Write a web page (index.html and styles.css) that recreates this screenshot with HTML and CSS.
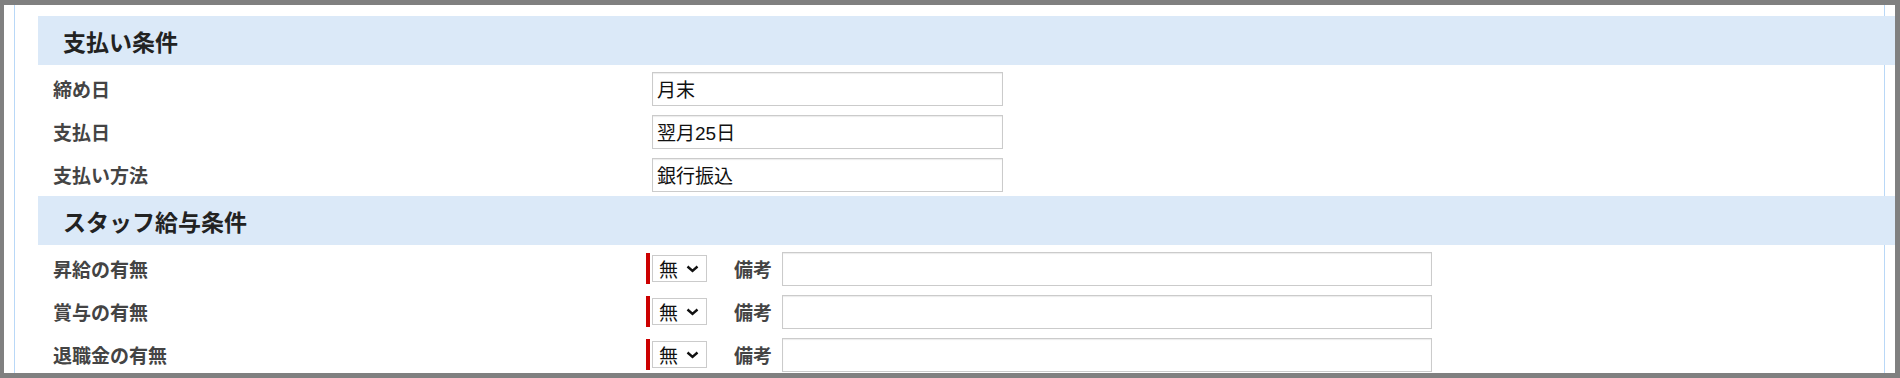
FILE: index.html
```html
<!DOCTYPE html>
<html lang="ja">
<head>
    <meta charset="UTF-8">
    <title>支払い条件</title>
    <link rel="stylesheet" href="styles.css">
</head>
<body>
    <div class="frame">
        <div class="panel">
            <div class="section-title">支払い条件</div>
            <div class="form-row">
                <div class="form-label">締め日</div>
                <div class="form-value">
                    <input type="text" class="text-input short" value="月末">
                </div>
            </div>
            <div class="form-row">
                <div class="form-label">支払日</div>
                <div class="form-value">
                    <input type="text" class="text-input short" value="翌月25日">
                </div>
            </div>
            <div class="form-row">
                <div class="form-label">支払い方法</div>
                <div class="form-value">
                    <input type="text" class="text-input short" value="銀行振込">
                </div>
            </div>

            <div class="section-title">スタッフ給与条件</div>
            <div class="form-row">
                <div class="form-label">昇給の有無</div>
                <div class="form-value required">
                    <div class="select-box">無
                        <svg class="chevron" width="13" height="8" viewBox="0 0 13 8"><path d="M1.5 1.5 L6.5 6 L11.5 1.5" fill="none" stroke="#111" stroke-width="2.4"/></svg>
                    </div>
                    <span class="note-label">備考</span>
                    <input type="text" class="text-input wide">
                </div>
            </div>
            <div class="form-row">
                <div class="form-label">賞与の有無</div>
                <div class="form-value required">
                    <div class="select-box">無
                        <svg class="chevron" width="13" height="8" viewBox="0 0 13 8"><path d="M1.5 1.5 L6.5 6 L11.5 1.5" fill="none" stroke="#111" stroke-width="2.4"/></svg>
                    </div>
                    <span class="note-label">備考</span>
                    <input type="text" class="text-input wide">
                </div>
            </div>
            <div class="form-row">
                <div class="form-label">退職金の有無</div>
                <div class="form-value required">
                    <div class="select-box">無
                        <svg class="chevron" width="13" height="8" viewBox="0 0 13 8"><path d="M1.5 1.5 L6.5 6 L11.5 1.5" fill="none" stroke="#111" stroke-width="2.4"/></svg>
                    </div>
                    <span class="note-label">備考</span>
                    <input type="text" class="text-input wide">
                </div>
            </div>
        </div>
    </div>
</body>
</html>
```

FILE: styles.css
```css
* {
    margin: 0;
    padding: 0;
    box-sizing: border-box;
}

body {
    font-family: "Noto Sans CJK JP", "Liberation Sans", sans-serif;
    background: #fff;
    overflow: hidden;
}

.frame {
    width: 1900px;
    height: 378px;
    border: 5px solid #808080;
    border-left-width: 4px;
    background: #fff;
    overflow: hidden;
}

.panel {
    height: 100%;
    margin: 0 10px;
    padding: 11px 0 0 23px;
    border-left: 1px solid #b9d8f7;
    border-right: 1px solid #b9d8f7;
}

.section-title {
    height: 49px;
    margin-right: -11px;
    margin-bottom: 2px;
    padding-left: 25px;
    display: flex;
    align-items: center;
    background: #dbe9f8;
    color: #222;
    font-size: 23px;
    font-weight: 700;
}

.form-row {
    height: 43px;
    display: flex;
    align-items: center;
}

.form-label {
    width: 608px;
    padding-left: 15px;
    color: #444;
    font-size: 19px;
    font-weight: 700;
}

.form-value {
    display: flex;
    align-items: center;
    padding-left: 6px;
}

.form-value.required {
    padding-left: 0;
    border-left: 4px solid #cc0000;
    height: 31px;
}

.text-input {
    height: 34px;
    padding: 0 4px;
    border: 1px solid #cbcbcb;
    box-shadow: inset 0 1px 1px rgba(0, 0, 0, 0.08);
    font-family: "Liberation Sans", "Noto Sans CJK JP", sans-serif;
    font-size: 19px;
    color: #111;
    outline: none;
}

.text-input.short {
    width: 351px;
}

.text-input.wide {
    width: 650px;
}

.select-box {
    width: 55px;
    height: 27px;
    margin-left: 2px;
    padding-left: 6px;
    display: flex;
    align-items: center;
    gap: 8px;
    border: 1px solid #cbcbcb;
    background: #fff;
    font-size: 19px;
    color: #111;
}

.chevron {
    flex: none;
}

.note-label {
    margin-left: 27px;
    margin-right: 10px;
    color: #444;
    font-size: 19px;
    font-weight: 700;
}
```
